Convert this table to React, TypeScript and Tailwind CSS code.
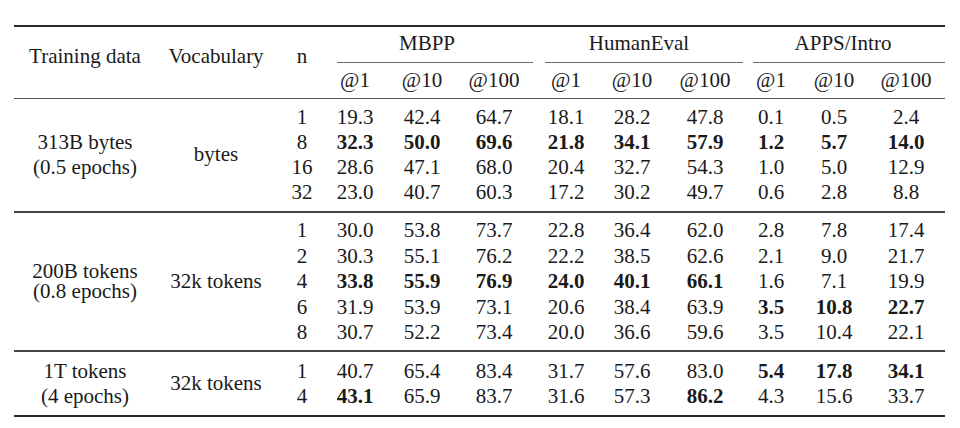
const numCols = [
  'w-[54px]',
  'w-[80px]',
  'w-[64px]',
  'w-[80px]',
  'w-[52px]',
  'w-[94px]',
  'w-[38px]',
  'w-[88px]',
  'w-[56px]',
];

const subHeads = ['@1', '@10', '@100', '@1', '@10', '@100', '@1', '@10', '@100'];

type Group = {
  data: string[];
  vocab: string;
  labelClass: string;
  rowClass: string;
  padClass: string;
  rows: { n: string; values: string[] }[];
};

// a leading * marks a bold (best) result
const groups: Group[] = [
  {
    data: ['313B bytes', '(0.5 epochs)'],
    vocab: 'bytes',
    labelClass: 'leading-[25px]',
    rowClass: 'h-[25px]',
    padClass: 'pt-[6px] pb-[6px]',
    rows: [
      { n: '1', values: ['19.3', '42.4', '64.7', '18.1', '28.2', '47.8', '0.1', '0.5', '2.4'] },
      { n: '8', values: ['*32.3', '*50.0', '*69.6', '*21.8', '*34.1', '*57.9', '*1.2', '*5.7', '*14.0'] },
      { n: '16', values: ['28.6', '47.1', '68.0', '20.4', '32.7', '54.3', '1.0', '5.0', '12.9'] },
      { n: '32', values: ['23.0', '40.7', '60.3', '17.2', '30.2', '49.7', '0.6', '2.8', '8.8'] },
    ],
  },
  {
    data: ['200B tokens', '(0.8 epochs)'],
    vocab: '32k tokens',
    labelClass: 'leading-[20px] pb-[2px]',
    rowClass: 'h-[25.4px]',
    padClass: 'pt-[6px] pb-[5px]',
    rows: [
      { n: '1', values: ['30.0', '53.8', '73.7', '22.8', '36.4', '62.0', '2.8', '7.8', '17.4'] },
      { n: '2', values: ['30.3', '55.1', '76.2', '22.2', '38.5', '62.6', '2.1', '9.0', '21.7'] },
      { n: '4', values: ['*33.8', '*55.9', '*76.9', '*24.0', '*40.1', '*66.1', '1.6', '7.1', '19.9'] },
      { n: '6', values: ['31.9', '53.9', '73.1', '20.6', '38.4', '63.9', '*3.5', '*10.8', '*22.7'] },
      { n: '8', values: ['30.7', '52.2', '73.4', '20.0', '36.6', '59.6', '3.5', '10.4', '22.1'] },
    ],
  },
  {
    data: ['1T tokens', '(4 epochs)'],
    vocab: '32k tokens',
    labelClass: 'leading-[25px]',
    rowClass: 'h-[25px]',
    padClass: 'pt-[7px] pb-[6px]',
    rows: [
      { n: '1', values: ['40.7', '65.4', '83.4', '31.7', '57.6', '83.0', '*5.4', '*17.8', '*34.1'] },
      { n: '4', values: ['*43.1', '65.9', '83.7', '31.6', '57.3', '*86.2', '4.3', '15.6', '33.7'] },
    ],
  },
];

const Cell = ({ value, width }: { value: string; width: string }) => {
  const bold = value.startsWith('*');
  return (
    <div className={`${width} flex justify-center items-center whitespace-nowrap ${bold ? 'font-bold' : ''}`}>
      {bold ? value.slice(1) : value}
    </div>
  );
};

const GroupBlock = ({ group }: { group: Group }) => (
  <div className={`flex ${group.padClass}`}>
    <div className={`w-[142px] flex flex-col justify-center items-center ${group.labelClass}`}>
      {group.data.map((line) => (
        <div key={line} className="whitespace-nowrap">{line}</div>
      ))}
    </div>
    <div className="w-[120px] flex items-center justify-center whitespace-nowrap">{group.vocab}</div>
    <div className="flex flex-col">
      {group.rows.map((row) => (
        <div key={row.n} className={`flex ${group.rowClass}`}>
          <div className="w-[52px] flex items-center justify-center">{row.n}</div>
          {row.values.map((v, i) => (
            <Cell key={i} value={v} width={numCols[i]} />
          ))}
        </div>
      ))}
    </div>
  </div>
);

const App = () => {
  return (
    <div className="w-[960px] h-[428px] bg-white overflow-hidden pl-[14px] pt-[25px] text-[21px] text-[#1a1a1a] font-['Liberation_Serif','Times_New_Roman',serif]">
      <div className="w-[931px]">
        {/* top rule */}
        <div className="h-[1.5px] bg-[#2a2a2a]" />

        {/* header */}
        <div className="flex h-[71.5px]">
          <div className="w-[142px] flex items-center justify-center pb-[12px] whitespace-nowrap">Training data</div>
          <div className="w-[120px] flex items-center justify-center pb-[12px] whitespace-nowrap">Vocabulary</div>
          <div className="w-[52px] flex items-center justify-center pb-[12px]">n</div>
          <div className="flex flex-col">
            <div className="flex h-[34px]">
              <div className="w-[198px] flex items-center justify-center">MBPP</div>
              <div className="w-[226px] flex items-center justify-center">HumanEval</div>
              <div className="w-[182px] flex items-center justify-center">APPS/Intro</div>
            </div>
            <div className="flex mt-[1px] h-px">
              <div className="w-[9px]" />
              <div className="w-[196px] bg-[#6a6a6a]" />
              <div className="w-[12px]" />
              <div className="w-[198px] bg-[#6a6a6a]" />
              <div className="w-[10px]" />
              <div className="w-[192px] bg-[#6a6a6a]" />
            </div>
            <div className="flex h-[35.5px]">
              {subHeads.map((h, i) => (
                <Cell key={i} value={h} width={numCols[i]} />
              ))}
            </div>
          </div>
        </div>

        {/* mid rule */}
        <div className="h-px bg-[#555]" />

        {groups.map((group, gi) => (
          <div key={group.data[0]}>
            <GroupBlock group={group} />
            <div className={gi === groups.length - 1 ? 'h-[2px] bg-[#2a2a2a]' : 'h-[1.5px] bg-[#444]'} />
          </div>
        ))}
      </div>
    </div>
  );
};

export default App;
